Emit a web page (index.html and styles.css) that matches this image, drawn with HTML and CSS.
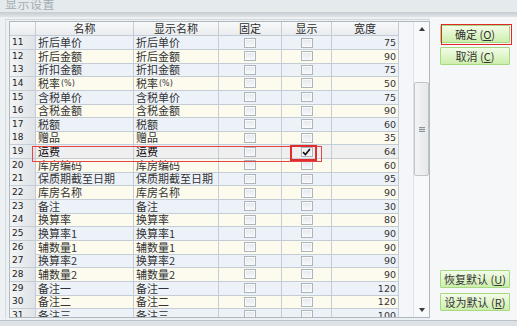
FILE: index.html
```html
<!DOCTYPE html>
<html lang="zh">
<head>
<meta charset="utf-8">
<title>显示设置</title>
<link rel="stylesheet" href="styles.css">
</head>
<body>
<div class="titlebar"><span class="title">显示设置</span></div>
<div class="band"></div>
<div class="main">
  <div class="left">
    <div class="grid">
      <div class="table">
        <div class="row head">
          <div class="c num"></div>
          <div class="c ctr">名称</div>
          <div class="c ctr">显示名称</div>
          <div class="c ctr">固定</div>
          <div class="c ctr">显示</div>
          <div class="c ctr">宽度</div>
        </div>
        <div class="row odd"><div class="c num">11</div><div class="c">折后单价</div><div class="c">折后单价</div><div class="c box"><span class="cb"></span></div><div class="c box"><span class="cb"></span></div><div class="c w">75</div></div>
        <div class="row even"><div class="c num">12</div><div class="c">折后金额</div><div class="c">折后金额</div><div class="c box"><span class="cb"></span></div><div class="c box"><span class="cb"></span></div><div class="c w">90</div></div>
        <div class="row odd"><div class="c num">13</div><div class="c">折扣金额</div><div class="c">折扣金额</div><div class="c box"><span class="cb"></span></div><div class="c box"><span class="cb"></span></div><div class="c w">75</div></div>
        <div class="row even"><div class="c num">14</div><div class="c">税率 <span class="sm">(%)</span></div><div class="c">税率 <span class="sm">(%)</span></div><div class="c box"><span class="cb"></span></div><div class="c box"><span class="cb"></span></div><div class="c w">50</div></div>
        <div class="row odd"><div class="c num">15</div><div class="c">含税单价</div><div class="c">含税单价</div><div class="c box"><span class="cb"></span></div><div class="c box"><span class="cb"></span></div><div class="c w">75</div></div>
        <div class="row even"><div class="c num">16</div><div class="c">含税金额</div><div class="c">含税金额</div><div class="c box"><span class="cb"></span></div><div class="c box"><span class="cb"></span></div><div class="c w">90</div></div>
        <div class="row odd"><div class="c num">17</div><div class="c">税额</div><div class="c">税额</div><div class="c box"><span class="cb"></span></div><div class="c box"><span class="cb"></span></div><div class="c w">60</div></div>
        <div class="row even"><div class="c num">18</div><div class="c">赠品</div><div class="c">赠品</div><div class="c box"><span class="cb"></span></div><div class="c box"><span class="cb"></span></div><div class="c w">35</div></div>
        <div class="row sel"><div class="c num">19</div><div class="c">运费</div><div class="c">运费</div><div class="c box"><span class="cb"></span></div><div class="c box"><span class="cb checked"><svg width="9" height="8" viewBox="0 0 9 8"><path d="M1 4.2 L3.4 6.5 L8 1" fill="none" stroke="#111" stroke-width="1.6"/></svg></span></div><div class="c w">64</div></div>
        <div class="row even"><div class="c num">20</div><div class="c">库房编码</div><div class="c">库房编码</div><div class="c box"><span class="cb"></span></div><div class="c box"><span class="cb"></span></div><div class="c w">60</div></div>
        <div class="row odd"><div class="c num">21</div><div class="c">保质期截至日期</div><div class="c">保质期截至日期</div><div class="c box"><span class="cb"></span></div><div class="c box"><span class="cb"></span></div><div class="c w">95</div></div>
        <div class="row even"><div class="c num">22</div><div class="c">库房名称</div><div class="c">库房名称</div><div class="c box"><span class="cb"></span></div><div class="c box"><span class="cb"></span></div><div class="c w">90</div></div>
        <div class="row odd"><div class="c num">23</div><div class="c">备注</div><div class="c">备注</div><div class="c box"><span class="cb"></span></div><div class="c box"><span class="cb"></span></div><div class="c w">30</div></div>
        <div class="row even"><div class="c num">24</div><div class="c">换算率</div><div class="c">换算率</div><div class="c box"><span class="cb"></span></div><div class="c box"><span class="cb"></span></div><div class="c w">80</div></div>
        <div class="row odd"><div class="c num">25</div><div class="c">换算率1</div><div class="c">换算率1</div><div class="c box"><span class="cb"></span></div><div class="c box"><span class="cb"></span></div><div class="c w">90</div></div>
        <div class="row even"><div class="c num">26</div><div class="c">辅数量1</div><div class="c">辅数量1</div><div class="c box"><span class="cb"></span></div><div class="c box"><span class="cb"></span></div><div class="c w">90</div></div>
        <div class="row odd"><div class="c num">27</div><div class="c">换算率2</div><div class="c">换算率2</div><div class="c box"><span class="cb"></span></div><div class="c box"><span class="cb"></span></div><div class="c w">90</div></div>
        <div class="row even"><div class="c num">28</div><div class="c">辅数量2</div><div class="c">辅数量2</div><div class="c box"><span class="cb"></span></div><div class="c box"><span class="cb"></span></div><div class="c w">90</div></div>
        <div class="row odd"><div class="c num">29</div><div class="c">备注一</div><div class="c">备注一</div><div class="c box"><span class="cb"></span></div><div class="c box"><span class="cb"></span></div><div class="c w">120</div></div>
        <div class="row even"><div class="c num">30</div><div class="c">备注二</div><div class="c">备注二</div><div class="c box"><span class="cb"></span></div><div class="c box"><span class="cb"></span></div><div class="c w">120</div></div>
        <div class="row odd"><div class="c num">31</div><div class="c">备注三</div><div class="c">备注三</div><div class="c box"><span class="cb"></span></div><div class="c box"><span class="cb"></span></div><div class="c w">100</div></div>
      </div>
      <div class="blank"></div>
      <div class="scroll">
        <div class="arrow up"></div>
        <div class="track">
          <div class="thumb"><span class="grip"></span></div>
        </div>
        <div class="arrow down"></div>
      </div>
      <div class="mark-row"></div>
      <div class="mark-box"></div>
    </div>
  </div>
  <div class="right">
    <div class="btn focus">确定 (<u>O</u>)</div>
    <div class="btn">取消 (<u>C</u>)</div>
    <div class="spacer"></div>
    <div class="btn">恢复默认 (<u>U</u>)</div>
    <div class="btn">设为默认 (<u>R</u>)</div>
  </div>
</div>
</body>
</html>
```
FILE: styles.css
```css
html, body {
  margin: 0;
  padding: 0;
}
body {
  width: 517px;
  height: 326px;
  overflow: hidden;
  background: #dfe2e5;
  font-family: "Noto Sans CJK SC", "DejaVu Sans", sans-serif;
  color: #333;
}
.titlebar {
  height: 12px;
  background: #e5ebed;
  overflow: hidden;
}
.title {
  display: block;
  margin: -3px 0 0 5px;
  font-size: 12px;
  line-height: 14px;
  color: #a3adb3;
  letter-spacing: 0.5px;
}
.band {
  height: 5px;
  background: linear-gradient(#c4ccd1, #dfe4e7);
}
.main {
  display: flex;
  height: 303px;
  background: #eef1f3;
  border-bottom: 1px solid #bcc3c8;
  padding-left: 5px;
}
.left {
  width: 425px;
  margin-top: 2px;
  border-left: 1px solid #d6dbdf;
  border-top: 1px solid #d2d8dc;
  padding: 1px 0 0 3px;
  box-sizing: border-box;
  height: 300px;
}
.grid {
  position: relative;
  width: 421px;
  height: 297px;
  box-sizing: border-box;
  border: 1px solid #aeb8c0;
  background: #f6f8fa;
  display: flex;
  overflow: hidden;
}
.table {
  width: 389px;
  flex: none;
  overflow: hidden;
}
.row {
  display: grid;
  grid-template-columns: 26px 98px 85px 63px 50px 67px;
  height: 13.65px;
}
.row.head {
  height: 14px;
  background: linear-gradient(#f8f9fa, #e8ebee);
}
.c {
  box-sizing: border-box;
  border-right: 1px solid #c4cdd5;
  border-bottom: 1px solid #c4cdd5;
  font-size: 11px;
  line-height: 13px;
  padding-left: 2px;
  white-space: nowrap;
  display: flex;
  align-items: center;
}
.c.ctr {
  justify-content: center;
  padding-left: 0;
  color: #2c2c2c;
}
.odd { background: #edf2f9; }
.even { background: #fcfbee; }
.sel { background: #efefef; }
.sel .c { color: #000; }
.c.num {
  background: linear-gradient(to right, #f3f4f5, #dfe3e7);
  font-family: "DejaVu Sans", sans-serif;
  font-size: 9px;
  color: #222;
  padding-left: 2px;
}
.head .c.num { background: transparent; }
.c.w {
  justify-content: flex-end;
  padding-right: 2px;
  font-family: "DejaVu Sans", sans-serif;
  font-size: 9.5px;
  color: #333;
}
.sm {
  font-family: "DejaVu Sans", sans-serif;
  font-size: 8px;
  margin-left: 1px;
}
.c.box {
  justify-content: center;
  padding-left: 0;
}
.cb {
  display: flex;
  align-items: center;
  justify-content: center;
  width: 12px;
  height: 10px;
  box-sizing: border-box;
  border: 1px solid #adb5bc;
  background: linear-gradient(#e4e8eb, #f7f8f9);
  box-shadow: inset 0 0 0 1px #f9fafb;
}
.cb.checked {
  background: #eef0f2;
}
.blank {
  width: 14px;
  flex: none;
  background: #f4f6f9;
}
.scroll {
  flex: 1;
  display: flex;
  flex-direction: column;
  background: #f8f9fa;
  border-left: 1px solid #dde2e6;
}
.arrow {
  height: 14px;
  display: flex;
  justify-content: center;
  align-items: center;
}
.arrow::after {
  content: "";
  width: 0;
  height: 0;
  border-left: 3.5px solid transparent;
  border-right: 3.5px solid transparent;
}
.arrow.up::after { border-bottom: 4px solid #3a3a3a; }
.arrow.down::after { border-top: 4px solid #3a3a3a; }
.track {
  flex: 1;
  padding-top: 46px;
}
.thumb {
  height: 94px;
  box-sizing: border-box;
  border: 1px solid #bfc4c9;
  border-radius: 2px;
  background: linear-gradient(to right, #f3f4f5, #e6e8ea);
  display: flex;
  align-items: center;
  justify-content: center;
}
.grip {
  width: 6px;
  height: 5px;
  background: repeating-linear-gradient(#8d949a 0 1px, #d8dbde 1px 2px);
}
.mark-row {
  position: absolute;
  left: 22px;
  top: 124px;
  width: 290px;
  height: 16px;
  box-sizing: border-box;
  border: 1px solid #e64545;
}
.mark-box {
  position: absolute;
  left: 280px;
  top: 123px;
  width: 27px;
  height: 16px;
  box-sizing: border-box;
  border: 2px solid #e22b2b;
}
.right {
  width: 87px;
  box-sizing: border-box;
  background: #f5f7f9;
  padding: 8px 7px 9px 10px;
  display: flex;
  flex-direction: column;
  gap: 4px;
}
.spacer { flex: 1; }
.btn {
  position: relative;
  height: 18px;
  box-sizing: border-box;
  border: 1px solid #a6d982;
  border-radius: 1px;
  background: linear-gradient(#f3fce8, #cdeead);
  font-size: 11px;
  line-height: 16px;
  text-align: center;
  color: #333;
  white-space: nowrap;
}
.spacer + .btn { margin-bottom: 1px; }
.btn.focus::after {
  content: "";
  position: absolute;
  left: 0px;
  top: -2px;
  width: 71px;
  height: 21px;
  box-sizing: border-box;
  border: 1px solid #e32626;
}
```
